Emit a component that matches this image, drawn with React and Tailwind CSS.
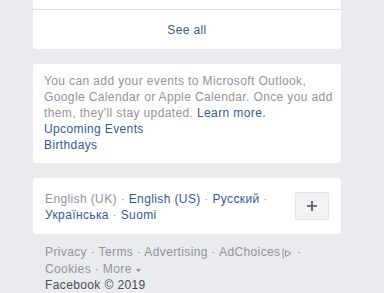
export default function App() {
  const sep = <span className="text-[#90949c]"> · </span>;
  return (
    <div className="h-[293px] w-[384px] overflow-hidden bg-[#e9ebee] font-['Liberation_Sans',Arial,sans-serif] text-[12px] leading-[16px] tracking-[0.38px]">
      <div className="ml-[33px] w-[308px] rounded-b-[3px] bg-white">
        <div className="h-[9px]" />
        <div className="flex h-[40px] items-center justify-center border-t border-[#dddfe2] text-[12px] text-[#365899]">
          See all
        </div>
      </div>

      <div className="ml-[33px] mt-[15px] h-[99px] w-[308px] rounded-[3px] bg-white pl-[11px] pr-[8px] pt-[9px] text-[#90949c]">
        <p>
          You can add your events to Microsoft Outlook, Google Calendar or Apple Calendar. Once you add them, they'll stay updated.{' '}
          <span className="text-[#365899]">Learn more.</span>
        </p>
        <p className="text-[#365899]">Upcoming Events</p>
        <p className="text-[#365899]">Birthdays</p>
      </div>

      <div className="ml-[33px] mt-[15px] flex h-[56px] w-[308px] items-center justify-between rounded-[3px] bg-white pl-[12px] pr-[12px]">
        <div className="w-[245px] pt-[1px] text-[#365899]">
          <span className="text-[#90949c]">English (UK)</span>
          {sep}English (US){sep}Русский{sep}
          <br />
          Українська{sep}Suomi
        </div>
        <button className="flex h-[28px] w-[34px] items-center justify-center rounded-[2px] border border-[#e4e6ea] bg-[#f2f3f5]">
          <svg width="12" height="12" viewBox="0 0 12 12">
            <path d="M6 1v10M1 6h10" stroke="#4b4f56" strokeWidth="1.6" />
          </svg>
        </button>
      </div>

      <div className="ml-[45px] mt-[10px] text-[#90949c]">
        <p>
          Privacy{sep}Terms{sep}Advertising{sep}AdChoices
          <span className="ml-[2px] inline-block align-middle">
            <svg width="11" height="11" viewBox="0 0 11 11" className="inline">
              <path d="M1 1v9M1 1h1M1 10h1" stroke="#90949c" strokeWidth="1" fill="none" />
              <path d="M3.5 2.5l5.5 3-5.5 3z" stroke="#90949c" strokeWidth="1" fill="none" />
            </svg>
          </span>
          {sep}
        </p>
        <p>
          Cookies{sep}More
          <svg width="8" height="6" viewBox="0 0 8 6" className="ml-[3px] inline">
            <path d="M1 2h5l-2.5 3z" fill="#90949c" />
          </svg>
        </p>
        <p className="text-[#4b4f56]">Facebook © 2019</p>
      </div>
    </div>
  );
}
